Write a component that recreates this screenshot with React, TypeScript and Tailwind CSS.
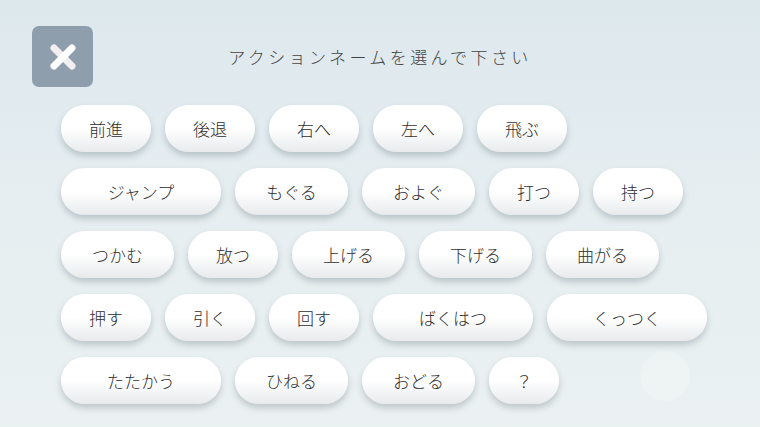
import React from "react";

type Action = { label: string; w: string };

const rows: Action[][] = [
  [
    { label: "前進", w: "w-[90px]" },
    { label: "後退", w: "w-[90px]" },
    { label: "右へ", w: "w-[90px]" },
    { label: "左へ", w: "w-[90px]" },
    { label: "飛ぶ", w: "w-[90px]" },
  ],
  [
    { label: "ジャンプ", w: "w-[160px]" },
    { label: "もぐる", w: "w-[113px]" },
    { label: "およぐ", w: "w-[113px]" },
    { label: "打つ", w: "w-[90px]" },
    { label: "持つ", w: "w-[90px]" },
  ],
  [
    { label: "つかむ", w: "w-[113px]" },
    { label: "放つ", w: "w-[90px]" },
    { label: "上げる", w: "w-[113px]" },
    { label: "下げる", w: "w-[113px]" },
    { label: "曲がる", w: "w-[113px]" },
  ],
  [
    { label: "押す", w: "w-[90px]" },
    { label: "引く", w: "w-[90px]" },
    { label: "回す", w: "w-[90px]" },
    { label: "ばくはつ", w: "w-[160px]" },
    { label: "くっつく", w: "w-[160px]" },
  ],
  [
    { label: "たたかう", w: "w-[160px]" },
    { label: "ひねる", w: "w-[113px]" },
    { label: "おどる", w: "w-[113px]" },
    { label: "？", w: "w-[70px]" },
  ],
];

const ActionButton = ({ label, w }: Action) => (
  <button
    className={`${w} h-[47px] shrink-0 rounded-full bg-gradient-to-b from-white via-white to-[#e8eaec] text-[17px] font-light text-[#2e2e2e] shadow-[0_4px_6px_rgba(60,80,90,0.26)]`}
  >
    {label}
  </button>
);

export default function App() {
  return (
    <div
      className="relative h-[427px] w-[760px] overflow-hidden bg-gradient-to-b from-[#dde8ed] via-[#e6eef1] to-[#ebf1f1]"
      style={{ fontFamily: '"Noto Sans CJK JP", "Noto Sans", sans-serif' }}
    >
      {/* faint background decoration */}
      <div className="absolute left-[640px] top-[351px] h-[50px] w-[50px] rounded-full bg-white/20" />

      <div className="relative flex flex-col px-[32px] pt-[26px]">
        <div className="grid grid-cols-[61px_1fr_61px] items-center">
          <button className="flex h-[61px] w-[61px] items-center justify-center rounded-[7px] bg-[#8e9eac]">
            <svg width="30" height="30" viewBox="0 0 30 30">
              <path d="M6 6 L24 24" stroke="#f3eef0" strokeWidth="7" strokeLinecap="round" />
              <path d="M24 6 L6 24" stroke="#ffffff" strokeWidth="7" strokeLinecap="round" />
            </svg>
          </button>
          <h1 className="text-center text-[17px] font-light tracking-[0.2em] text-[#444]">
            アクションネームを選んで下さい
          </h1>
          <div />
        </div>

        <div className="mt-[18px] flex flex-col gap-[16px] pl-[29px]">
          {rows.map((row, i) => (
            <div key={i} className="flex gap-[14px]">
              {row.map((a) => (
                <ActionButton key={a.label} {...a} />
              ))}
            </div>
          ))}
        </div>
      </div>
    </div>
  );
}
